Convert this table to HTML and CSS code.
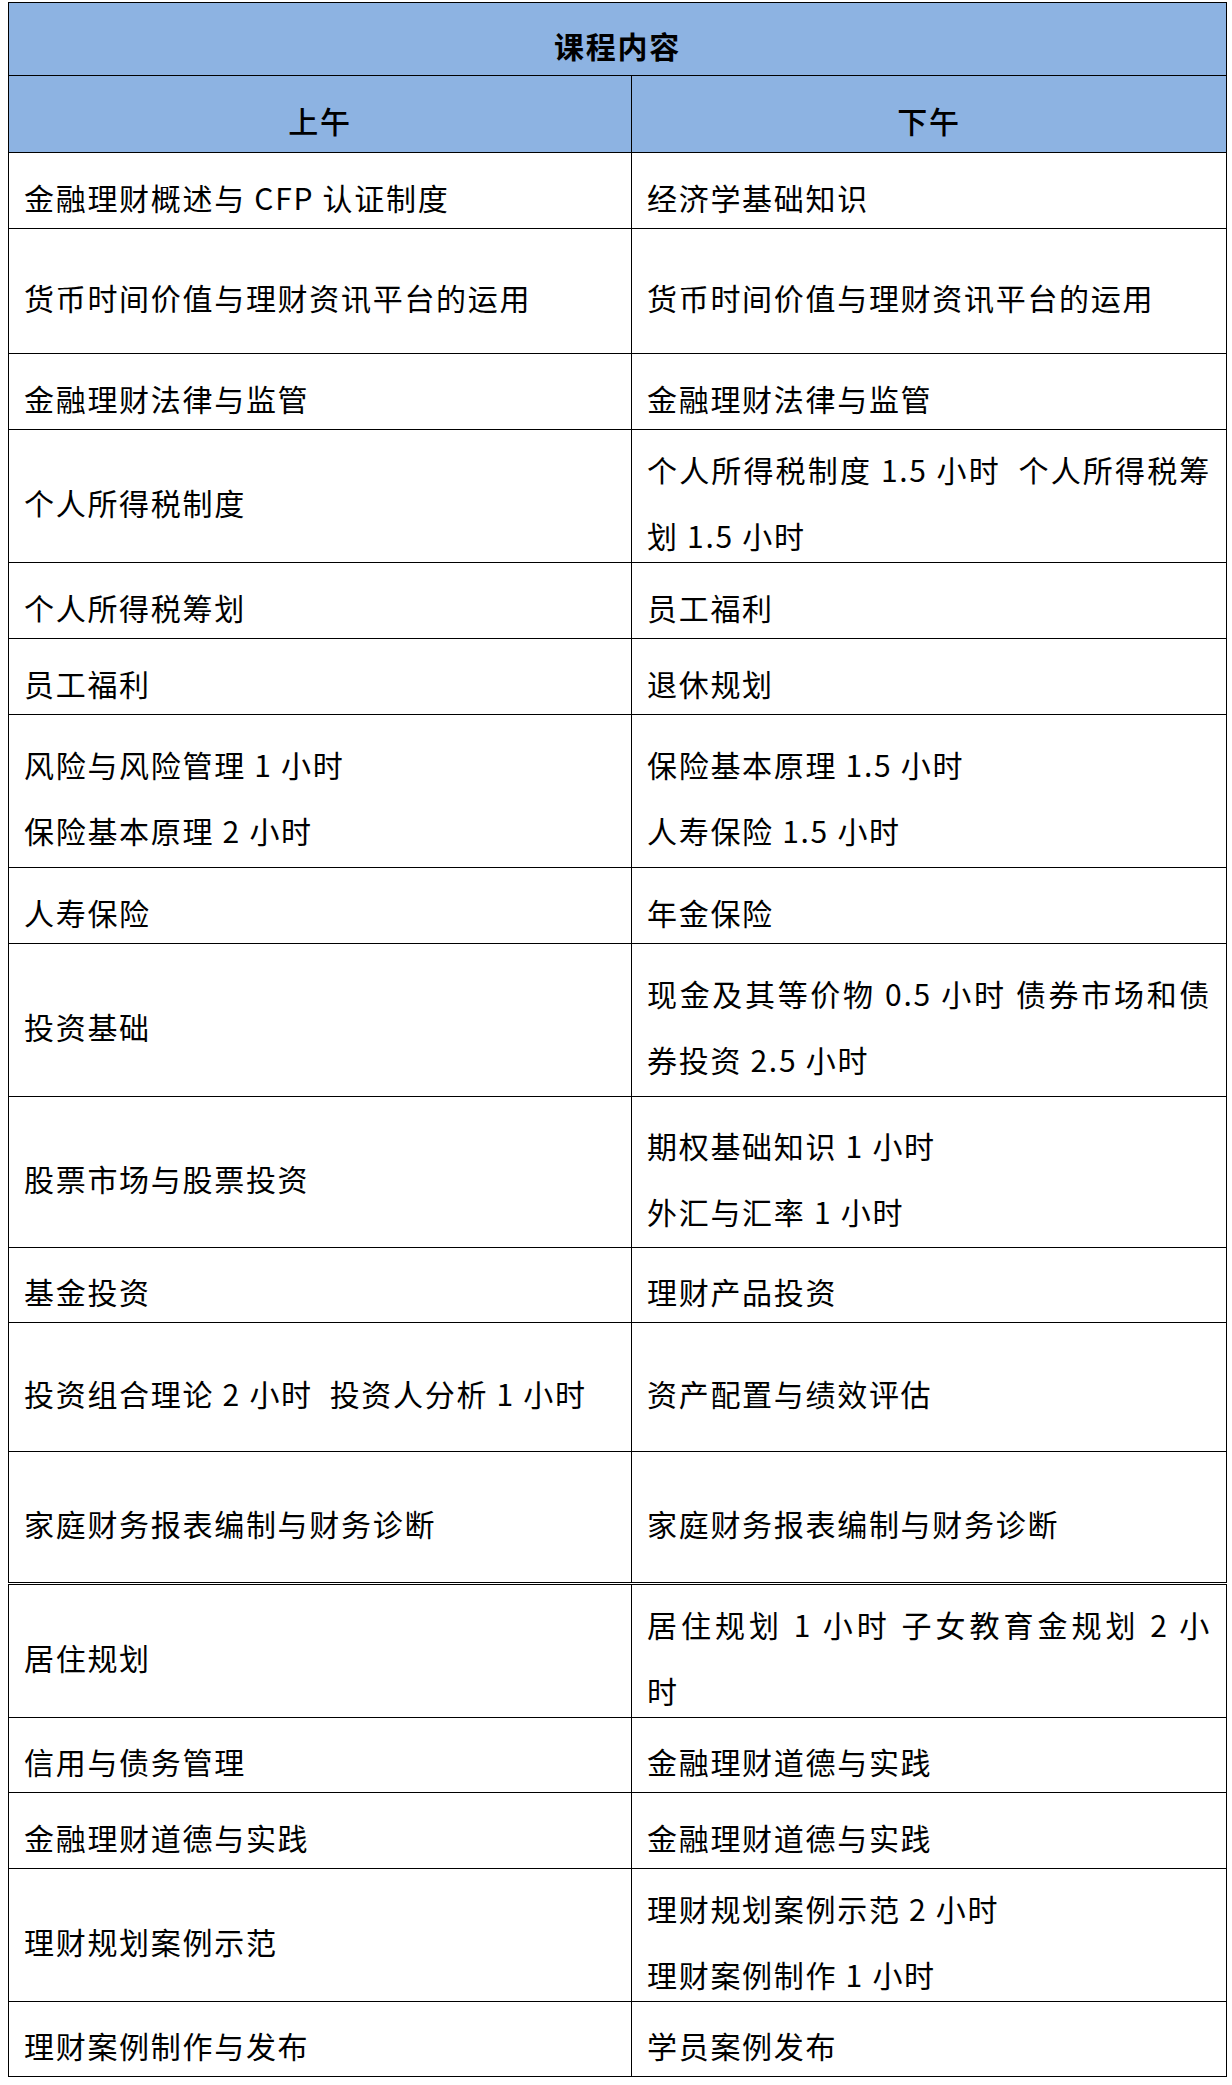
FILE: index.html
```html
<!DOCTYPE html>
<html lang="zh-CN">
<head>
<meta charset="utf-8">
<title>课程内容</title>
<link rel="stylesheet" href="styles.css">
</head>
<body>
<table class="course">
  <colgroup>
    <col class="col-am">
    <col class="col-pm">
  </colgroup>
  <thead>
    <tr class="h73"><th class="title" colspan="2"><p class="ln">课程内容</p></th></tr>
    <tr class="h77"><th class="half"><p class="ln">上午</p></th><th class="half"><p class="ln">下午</p></th></tr>
  </thead>
  <tbody>
    <tr class="h76"><td><p class="ln">金融理财概述与 CFP 认证制度</p></td><td><p class="ln">经济学基础知识</p></td></tr>
    <tr class="h125"><td><p class="ln">货币时间价值与理财资讯平台的运用</p></td><td><p class="ln">货币时间价值与理财资讯平台的运用</p></td></tr>
    <tr class="h76"><td><p class="ln">金融理财法律与监管</p></td><td><p class="ln">金融理财法律与监管</p></td></tr>
    <tr class="h132"><td><p class="ln">个人所得税制度</p></td><td><p class="ln"><span class="jl">个人所得税制度 1.5 小时&nbsp; 个人所得税筹</span>划 1.5 小时</p></td></tr>
    <tr class="h76"><td><p class="ln">个人所得税筹划</p></td><td><p class="ln">员工福利</p></td></tr>
    <tr class="h76"><td><p class="ln">员工福利</p></td><td><p class="ln">退休规划</p></td></tr>
    <tr class="h153"><td><p class="ln">风险与风险管理 1 小时<br>保险基本原理 2 小时</p></td><td><p class="ln">保险基本原理 1.5 小时<br>人寿保险 1.5 小时</p></td></tr>
    <tr class="h76"><td><p class="ln">人寿保险</p></td><td><p class="ln">年金保险</p></td></tr>
    <tr class="h153"><td><p class="ln">投资基础</p></td><td><p class="ln"><span class="jl">现金及其等价物 0.5 小时 债券市场和债</span>券投资 2.5 小时</p></td></tr>
    <tr class="h151"><td><p class="ln">股票市场与股票投资</p></td><td><p class="ln">期权基础知识 1 小时<br>外汇与汇率 1 小时</p></td></tr>
    <tr class="h75"><td><p class="ln">基金投资</p></td><td><p class="ln">理财产品投资</p></td></tr>
    <tr class="h129"><td><p class="ln">投资组合理论 2 小时&nbsp; 投资人分析 1 小时</p></td><td><p class="ln">资产配置与绩效评估</p></td></tr>
    <tr class="h132 split"><td><p class="ln">家庭财务报表编制与财务诊断</p></td><td><p class="ln">家庭财务报表编制与财务诊断</p></td></tr>
    <tr class="h132"><td><p class="ln">居住规划</p></td><td><p class="ln"><span class="jl">居住规划 1 小时 子女教育金规划 2 小</span>时</p></td></tr>
    <tr class="h75"><td><p class="ln">信用与债务管理</p></td><td><p class="ln">金融理财道德与实践</p></td></tr>
    <tr class="h76"><td><p class="ln">金融理财道德与实践</p></td><td><p class="ln">金融理财道德与实践</p></td></tr>
    <tr class="h131"><td><p class="ln">理财规划案例示范</p></td><td><p class="ln">理财规划案例示范 2 小时<br>理财案例制作 1 小时</p></td></tr>
    <tr class="h75"><td><p class="ln">理财案例制作与发布</p></td><td><p class="ln">学员案例发布</p></td></tr>
  </tbody>
</table>
</body>
</html>
```

FILE: styles.css
```css
html, body {
  margin: 0;
  padding: 0;
  background: #ffffff;
}

body {
  font-family: "Noto Sans CJK SC", "Noto Sans", "Liberation Sans", sans-serif;
  color: #000000;
}

.course {
  border-collapse: collapse;
  table-layout: fixed;
  width: 1218px;
  margin: 2px 0 0 8px;
}

.col-am { width: 623px; }
.col-pm { width: 595px; }

.course th,
.course td {
  border: 1px solid #000000;
  padding: 0 15px;
  font-size: 30px;
  letter-spacing: 1.7px;
  vertical-align: middle;
  text-align: left;
  font-weight: 400;
}

.course th {
  background: #8db3e2;
  text-align: center;
  font-weight: 500;
}

.course th.title {
  font-weight: 700;
}

.ln {
  margin: 6px 0 -6px;
  line-height: 66px;
}

.jl {
  display: block;
  text-align: justify;
  text-align-last: justify;
}

.split td {
  border-bottom: 3px double #000000;
}

.h73 { height: 73px; }
.h75 { height: 75px; }
.h76 { height: 76px; }
.h77 { height: 77px; }
.h125 { height: 125px; }
.h129 { height: 129px; }
.h131 { height: 131px; }
.h132 { height: 132px; }
.h151 { height: 151px; }
.h153 { height: 153px; }
```
